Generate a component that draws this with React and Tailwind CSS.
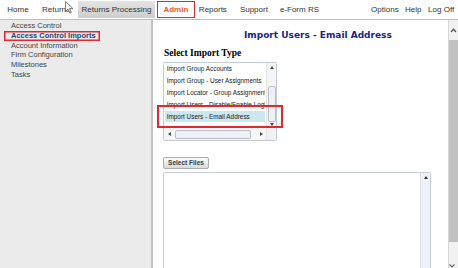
import React from "react";

const sans = "font-['Liberation_Sans',Arial,sans-serif]";

function Cursor() {
  return (
    <svg className="absolute left-[65px] top-[1px]" width="9" height="13" viewBox="0 0 9 13">
      <path
        d="M0.6 0.6V10.4L3 8.2L4.9 12.1L6.4 11.4L4.6 7.6H7.9Z"
        fill="#fff"
        stroke="#555"
        strokeWidth="0.8"
        strokeLinejoin="round"
      />
    </svg>
  );
}

function Arrow({ dir, color = "#4a4a4a" }) {
  const pts = {
    up: "0,3 2,0 4,3",
    down: "0,0 4,0 2,3",
    left: "3,0 3,4 0,2",
    right: "0,0 0,4 3,2",
  }[dir];
  const vertical = dir === "up" || dir === "down";
  return (
    <svg width={vertical ? 4 : 3} height={vertical ? 3 : 4} viewBox={vertical ? "0 0 4 3" : "0 0 3 4"}>
      <polygon points={pts} fill={color} />
    </svg>
  );
}

function TopNav() {
  return (
    <div className="relative flex h-[20px] shrink-0 items-center border-b border-[#bfbfbf] bg-white text-[8px] leading-[10px] text-[#333]">
      <span className="ml-[7.3px]">Home</span>
      <span className="ml-[13.4px]">Returns</span>
      <span className="ml-[8px] flex h-[17px] items-center bg-gradient-to-b from-[#e4e4e4] to-[#cdcdcd] px-[3.5px]">
        Returns Processing
      </span>
      <span className="ml-[2px] flex h-[17px] w-[38px] items-center justify-center border-[1.5px] border-[#e5262d] font-bold text-[#f2552c]">
        Admin
      </span>
      <span className="ml-[4px]">Reports</span>
      <span className="ml-[13px]">Support</span>
      <span className="ml-[12px]">e-Form RS</span>
      <span className="ml-auto">Options</span>
      <span className="ml-[6.4px]">Help</span>
      <span className="ml-[6.6px] mr-[3.8px]">Log Off</span>
      <Cursor />
    </div>
  );
}

function Sidebar() {
  const items = ["Access Control", "Access Control Imports", "Account Information", "Firm Configuration", "Milestones", "Tasks"];
  return (
    <aside className="w-[153px] shrink-0 border-r-2 border-[#c3c3c3] bg-[#ebebeb] pl-[11px] pt-[1px] text-[7.5px] leading-[9.8px] text-[#444]">
      {items.map((t, i) =>
        i === 1 ? (
          <div
            key={t}
            className="-ml-[7px] w-fit pl-[7px] pr-[4px] font-bold text-[#1c4475] ring-[1.5px] ring-inset ring-[#e3262f]"
          >
            {t}
          </div>
        ) : (
          <div key={t}>{t}</div>
        )
      )}
    </aside>
  );
}

function ImportList() {
  const options = [
    "Import Group Accounts",
    "Import Group - User Assignments",
    "Import Locator - Group Assignments",
    "Import Users - Disable/Enable Login",
    "Import Users - Email Address",
  ];
  return (
    <div className="relative mt-[3px] grid h-[79px] w-[114px] grid-cols-[1fr_10px] grid-rows-[1fr_13px] overflow-hidden rounded-[2px] border border-[#c3cbd3] bg-white">
      <div className="overflow-hidden">
        {options.map((o, i) => (
          <div
            key={o}
            className={`mx-[1px] h-[11.9px] overflow-hidden whitespace-nowrap pl-[1.7px] text-[6.4px] leading-[11.9px] text-[#222] ${
              i === 4 ? "bg-[#cbe7f0]" : ""
            }`}
          >
            {o}
          </div>
        ))}
      </div>
      <div className="flex flex-col items-center border-l border-[#e1e5ea] bg-[#f3f5f7]">
        <div className="mt-[3px]">
          <Arrow dir="up" />
        </div>
        <div className="mt-[17px] h-[36px] w-[8px] rounded-[2px] border border-[#b8bfc7] bg-[#eef1f4]" />
        <div className="mt-auto mb-[1.5px]">
          <Arrow dir="down" />
        </div>
      </div>
      <div className="flex items-center border-t border-[#e1e5ea] bg-[#f3f5f7] pl-[3.5px] pr-[3px]">
        <Arrow dir="left" />
        <div className="ml-[4px] h-[9px] w-[76px] rounded-[2px] border border-[#b8bfc7] bg-[#eef1f4]" />
        <div className="ml-auto">
          <Arrow dir="right" />
        </div>
      </div>
      <div className="border-l border-t border-[#e1e5ea] bg-[#eef1f4]" />
      <div className="pointer-events-none absolute" />
    </div>
  );
}

function PageScrollbar() {
  return (
    <div className="flex w-[10px] shrink-0 flex-col border-l border-[#d6d6d6] bg-[#f1f1f1]">
      <div className="flex h-[20px] items-center justify-center">
        <svg width="7" height="5" viewBox="0 0 7 5">
          <path d="M1 4L3.5 1.3L6 4" fill="none" stroke="#555" strokeWidth="1.3" />
        </svg>
      </div>
      <div className="h-[202px] bg-[#c1c1c1]" />
      <div className="mt-auto">
        <svg width="7" height="4" viewBox="0 0 7 4">
          <path d="M0.5 0.5L3 3L5.5 0.5" fill="none" stroke="#666" strokeWidth="1.1" />
        </svg>
      </div>
    </div>
  );
}

export default function App() {
  return (
    <div className={`flex h-[268px] w-[458px] flex-col overflow-hidden bg-white ${sans}`}>
      <TopNav />
      <div className="flex min-h-0 flex-1">
        <Sidebar />
        <main className="flex min-w-0 flex-1">
          <div className="relative min-w-0 flex-1 pl-[10px] pt-[9.5px]">
            <h1 className="pl-[81px] font-['DejaVu_Sans',Verdana,sans-serif] text-[9px] font-bold leading-[11px] text-[#1b2580]">
              Import Users - Email Address
            </h1>
            <h2 className="mt-[7.5px] pl-[1px] font-['Liberation_Serif','Times_New_Roman',serif] text-[9.5px] font-bold leading-[11px] text-black">
              Select Import Type
            </h2>
            <ImportList />
            <button className="mt-[16px] flex h-[12px] w-[46px] items-center justify-center rounded-[2px] border border-[#a9acb0] bg-gradient-to-b from-[#fbfbfb] to-[#d9d9d9] text-[6.5px] font-bold text-[#3a3a3a]">
              Select Files
            </button>
            <div className="mt-[3px] flex h-[120px] w-[268px] rounded-[2px] border border-[#c7ced6] bg-white">
              <div className="flex-1" />
              <div className="flex w-[10px] flex-col items-center border-l border-[#dae0e6] bg-[#eef2f6] pt-[3px]">
                <Arrow dir="up" color="#333" />
              </div>
            </div>
            <div className="pointer-events-none absolute left-[4px] top-[85px] h-[23px] w-[126px] border-2 border-[#e3262f]" />
          </div>
          <PageScrollbar />
        </main>
      </div>
    </div>
  );
}
